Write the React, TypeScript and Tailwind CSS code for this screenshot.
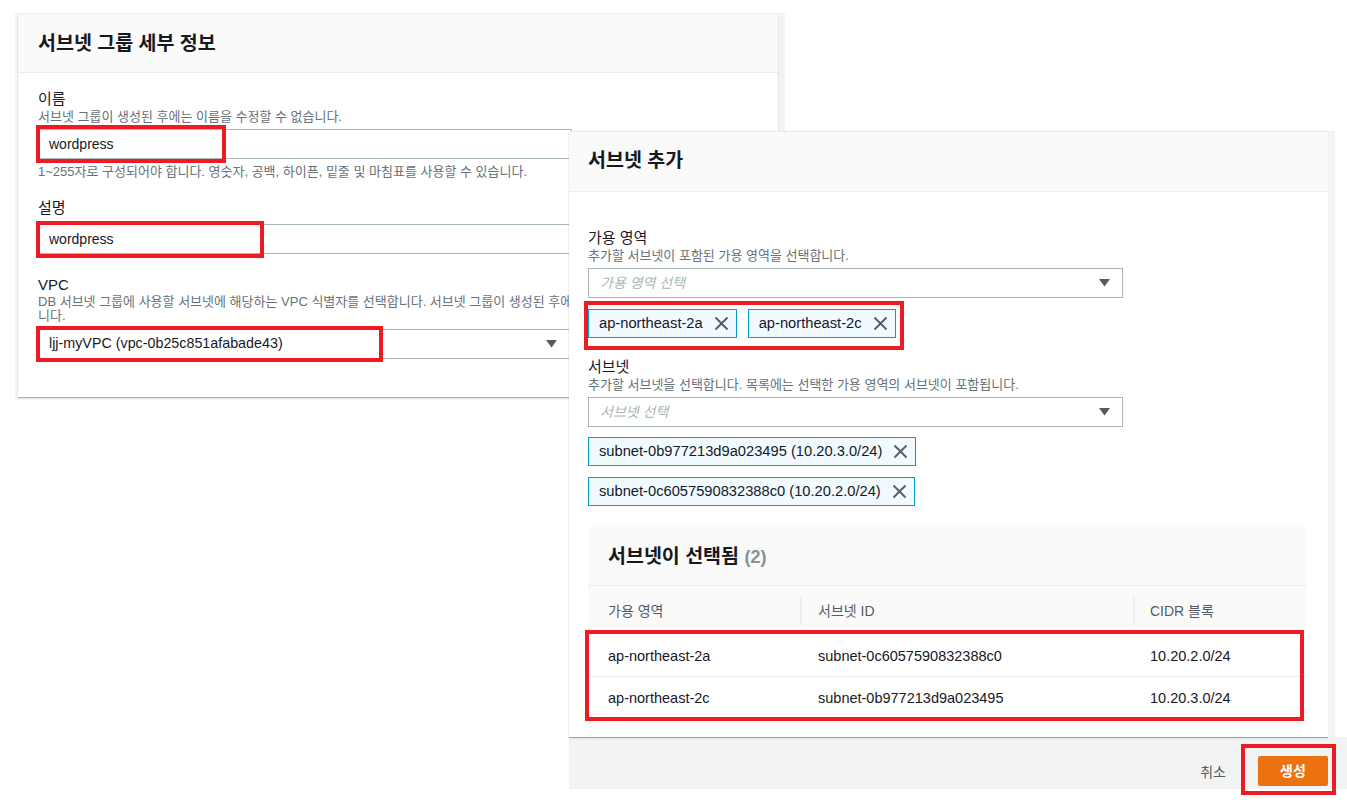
import React from "react"

const font = "font-['Liberation_Sans','Noto_Sans_CJK_KR',sans-serif]"

function Caret() {
  return (
    <svg width="11" height="8" viewBox="0 0 11 8" className="shrink-0">
      <path d="M0 0 H11 L5.5 7.5 Z" fill="#545b64" />
    </svg>
  )
}

function XIcon() {
  return (
    <svg width="15" height="15" viewBox="0 0 15 15" className="shrink-0">
      <path d="M1.5 1.5 L13.5 13.5 M13.5 1.5 L1.5 13.5" stroke="#545b64" strokeWidth="1.8" fill="none" />
    </svg>
  )
}

function Token({ text }: { text: string }) {
  return (
    <div className="inline-flex h-[29px] items-center gap-[11px] border border-[#00a1c9] bg-[#f1faff] pl-[10px] pr-[7px] text-[14.7px] text-[#16191f]">
      <span>{text}</span>
      <XIcon />
    </div>
  )
}

function RedBox({ className }: { className: string }) {
  return <div className={`pointer-events-none absolute border-[4px] border-[#ed1c24] ${className}`} />
}

const rows = [
  ["ap-northeast-2a", "subnet-0c6057590832388c0", "10.20.2.0/24", "h-[46px] pt-[7px]"],
  ["ap-northeast-2c", "subnet-0b977213d9a023495", "10.20.3.0/24", "h-[41px] pt-[4px]"],
]

export default function App() {
  return (
    <div className={`relative h-[800px] w-[1347px] overflow-hidden bg-white text-[#16191f] ${font}`}>
      {/* 서브넷 그룹 세부 정보 */}
      <div className="absolute left-[15px] top-[13px] w-[770px] bg-[#f2f3f3] pb-[3px] pl-[3px] pr-[7px] pt-[2px]">
        <div className="bg-white shadow-[0_1px_1px_0_rgba(0,28,36,0.3)]">
          <div className="flex h-[58px] items-center border-b border-[#eaeded] bg-[#fafafa] px-[20px] pb-[2px]">
            <h2 className="text-[19.5px] font-bold leading-[24px]">서브넷 그룹 세부 정보</h2>
          </div>
          <div className="px-[20px] pb-[38px] pt-[16px]">
            <div className="text-[15px] leading-[20px]">이름</div>
            <div className="text-[13px] leading-[16px] text-[#687078]">서브넷 그룹이 생성된 후에는 이름을 수정할 수 없습니다.</div>
            <div className="mt-[4px] flex h-[30px] w-[534px] items-center border border-[#aab7b8] px-[10px] text-[14px]">wordpress</div>
            <div className="mt-[5px] text-[13px] leading-[16px] text-[#687078]">
              1~255자로 구성되어야 합니다. 영숫자, 공백, 하이픈, 밑줄 및 마침표를 사용할 수 있습니다.
            </div>
            <div className="mt-[18px] text-[15px] leading-[20px]">설명</div>
            <div className="mt-[6px] flex h-[30px] w-[534px] items-center border border-[#aab7b8] px-[10px] text-[14px]">wordpress</div>
            <div className="mt-[21px] text-[15px] leading-[20px]">VPC</div>
            <div className="text-[13px] leading-[14px] text-[#687078]">
              <div className="whitespace-nowrap">DB 서브넷 그룹에 사용할 서브넷에 해당하는 VPC 식별자를 선택합니다. 서브넷 그룹이 생성된 후에는 VPC를 변경할 수 없습</div>
              <div>니다.</div>
            </div>
            <div className="mt-[6px] flex h-[30px] w-[534px] items-center justify-between border border-[#aab7b8] pl-[10px] pr-[14px] text-[14.3px]">
              <span>ljj-myVPC (vpc-0b25c851afabade43)</span>
              <Caret />
            </div>
          </div>
        </div>
      </div>

      {/* 서브넷 추가 */}
      <div className="absolute left-[569px] top-[131px] z-10 w-[778px]">
        <div className="flex">
          <div className="w-[759px] border-t border-[#eaeded] bg-white shadow-[0_1px_1px_0_rgba(0,28,36,0.35)]">
            <div className="flex h-[60px] items-center border-b border-[#eaeded] bg-[#fafafa] px-[19px] pb-[3px]">
              <h2 className="text-[19.5px] font-bold leading-[24px]">서브넷 추가</h2>
            </div>
            <div className="pb-[19px] pl-[19px] pr-[21px] pt-[36px]">
              <div className="text-[15px] leading-[20px]">가용 영역</div>
              <div className="text-[13px] leading-[16px] text-[#687078]">추가할 서브넷이 포함된 가용 영역을 선택합니다.</div>
              <div className="mt-[4px] flex h-[30px] w-[535px] items-center justify-between border border-[#aab7b8] pl-[11px] pr-[12px] text-[14px]">
                <span className="italic text-[#aab7b8]">가용 영역 선택</span>
                <Caret />
              </div>
              <div className="mt-[11px] flex gap-[11px]">
                <Token text="ap-northeast-2a" />
                <Token text="ap-northeast-2c" />
              </div>
              <div className="mt-[19px] text-[15px] leading-[20px]">서브넷</div>
              <div className="text-[13px] leading-[16px] text-[#687078]">추가할 서브넷을 선택합니다. 목록에는 선택한 가용 영역의 서브넷이 포함됩니다.</div>
              <div className="mt-[4px] flex h-[30px] w-[535px] items-center justify-between border border-[#aab7b8] pl-[11px] pr-[12px] text-[14px]">
                <span className="italic text-[#aab7b8]">서브넷 선택</span>
                <Caret />
              </div>
              <div className="mt-[10px] flex flex-col items-start gap-[11px]">
                <Token text="subnet-0b977213d9a023495 (10.20.3.0/24)" />
                <Token text="subnet-0c6057590832388c0 (10.20.2.0/24)" />
              </div>

              <div className="mt-[21px]">
                <div className="flex h-[59px] items-center border-b border-[#eaeded] bg-[#fafafa] px-[20px] pt-[1px]">
                  <h3 className="text-[19.5px] font-bold leading-[24px]">
                    서브넷이 선택됨 <span className="text-[18px] text-[#879196]">(2)</span>
                  </h3>
                </div>
                <div className="grid h-[45px] grid-cols-[212px_333px_1fr] items-center bg-[#fafafa] pt-[5px] text-[14px] text-[#545b64]">
                  <div className="pl-[20px]">가용 영역</div>
                  <div className="border-l-2 border-[#eaeded] pl-[16px] leading-[28px]">서브넷 ID</div>
                  <div className="border-l-2 border-[#eaeded] pl-[15px] leading-[28px]">CIDR 블록</div>
                </div>
                {rows.map(([az, id, cidr, h]) => (
                  <div key={id} className={`grid grid-cols-[212px_333px_1fr] items-center border-b border-[#eaeded] text-[14.5px] ${h}`}>
                    <div className="pl-[20px]">{az}</div>
                    <div className="pl-[18px]">{id}</div>
                    <div className="pl-[17px]">{cidr}</div>
                  </div>
                ))}
              </div>
            </div>
          </div>
          <div className="w-[7px] bg-[#f2f3f3]" />
        </div>
        <div className="flex h-[52px] items-start justify-end bg-[#f2f3f3] pr-[19px] pt-[19px]">
          <span className="mr-[32px] mt-[4px] text-[14px] leading-[24px] text-[#545b64]">취소</span>
          <button className="h-[30px] w-[70px] rounded-[2px] bg-[#ec7211] text-[14px] font-bold text-white">생성</button>
        </div>
      </div>

      {/* annotations */}
      <div className="absolute inset-0 z-20">
        <RedBox className="left-[36px] top-[125px] h-[38px] w-[190px]" />
        <RedBox className="left-[36px] top-[221px] h-[37px] w-[228px]" />
        <RedBox className="left-[36px] top-[326px] h-[36px] w-[347px]" />
        <RedBox className="left-[584px] top-[301px] h-[49px] w-[320px]" />
        <RedBox className="left-[585px] top-[630px] h-[91px] w-[719px]" />
        <RedBox className="left-[1241px] top-[744px] h-[51px] w-[95px]" />
      </div>
    </div>
  )
}
